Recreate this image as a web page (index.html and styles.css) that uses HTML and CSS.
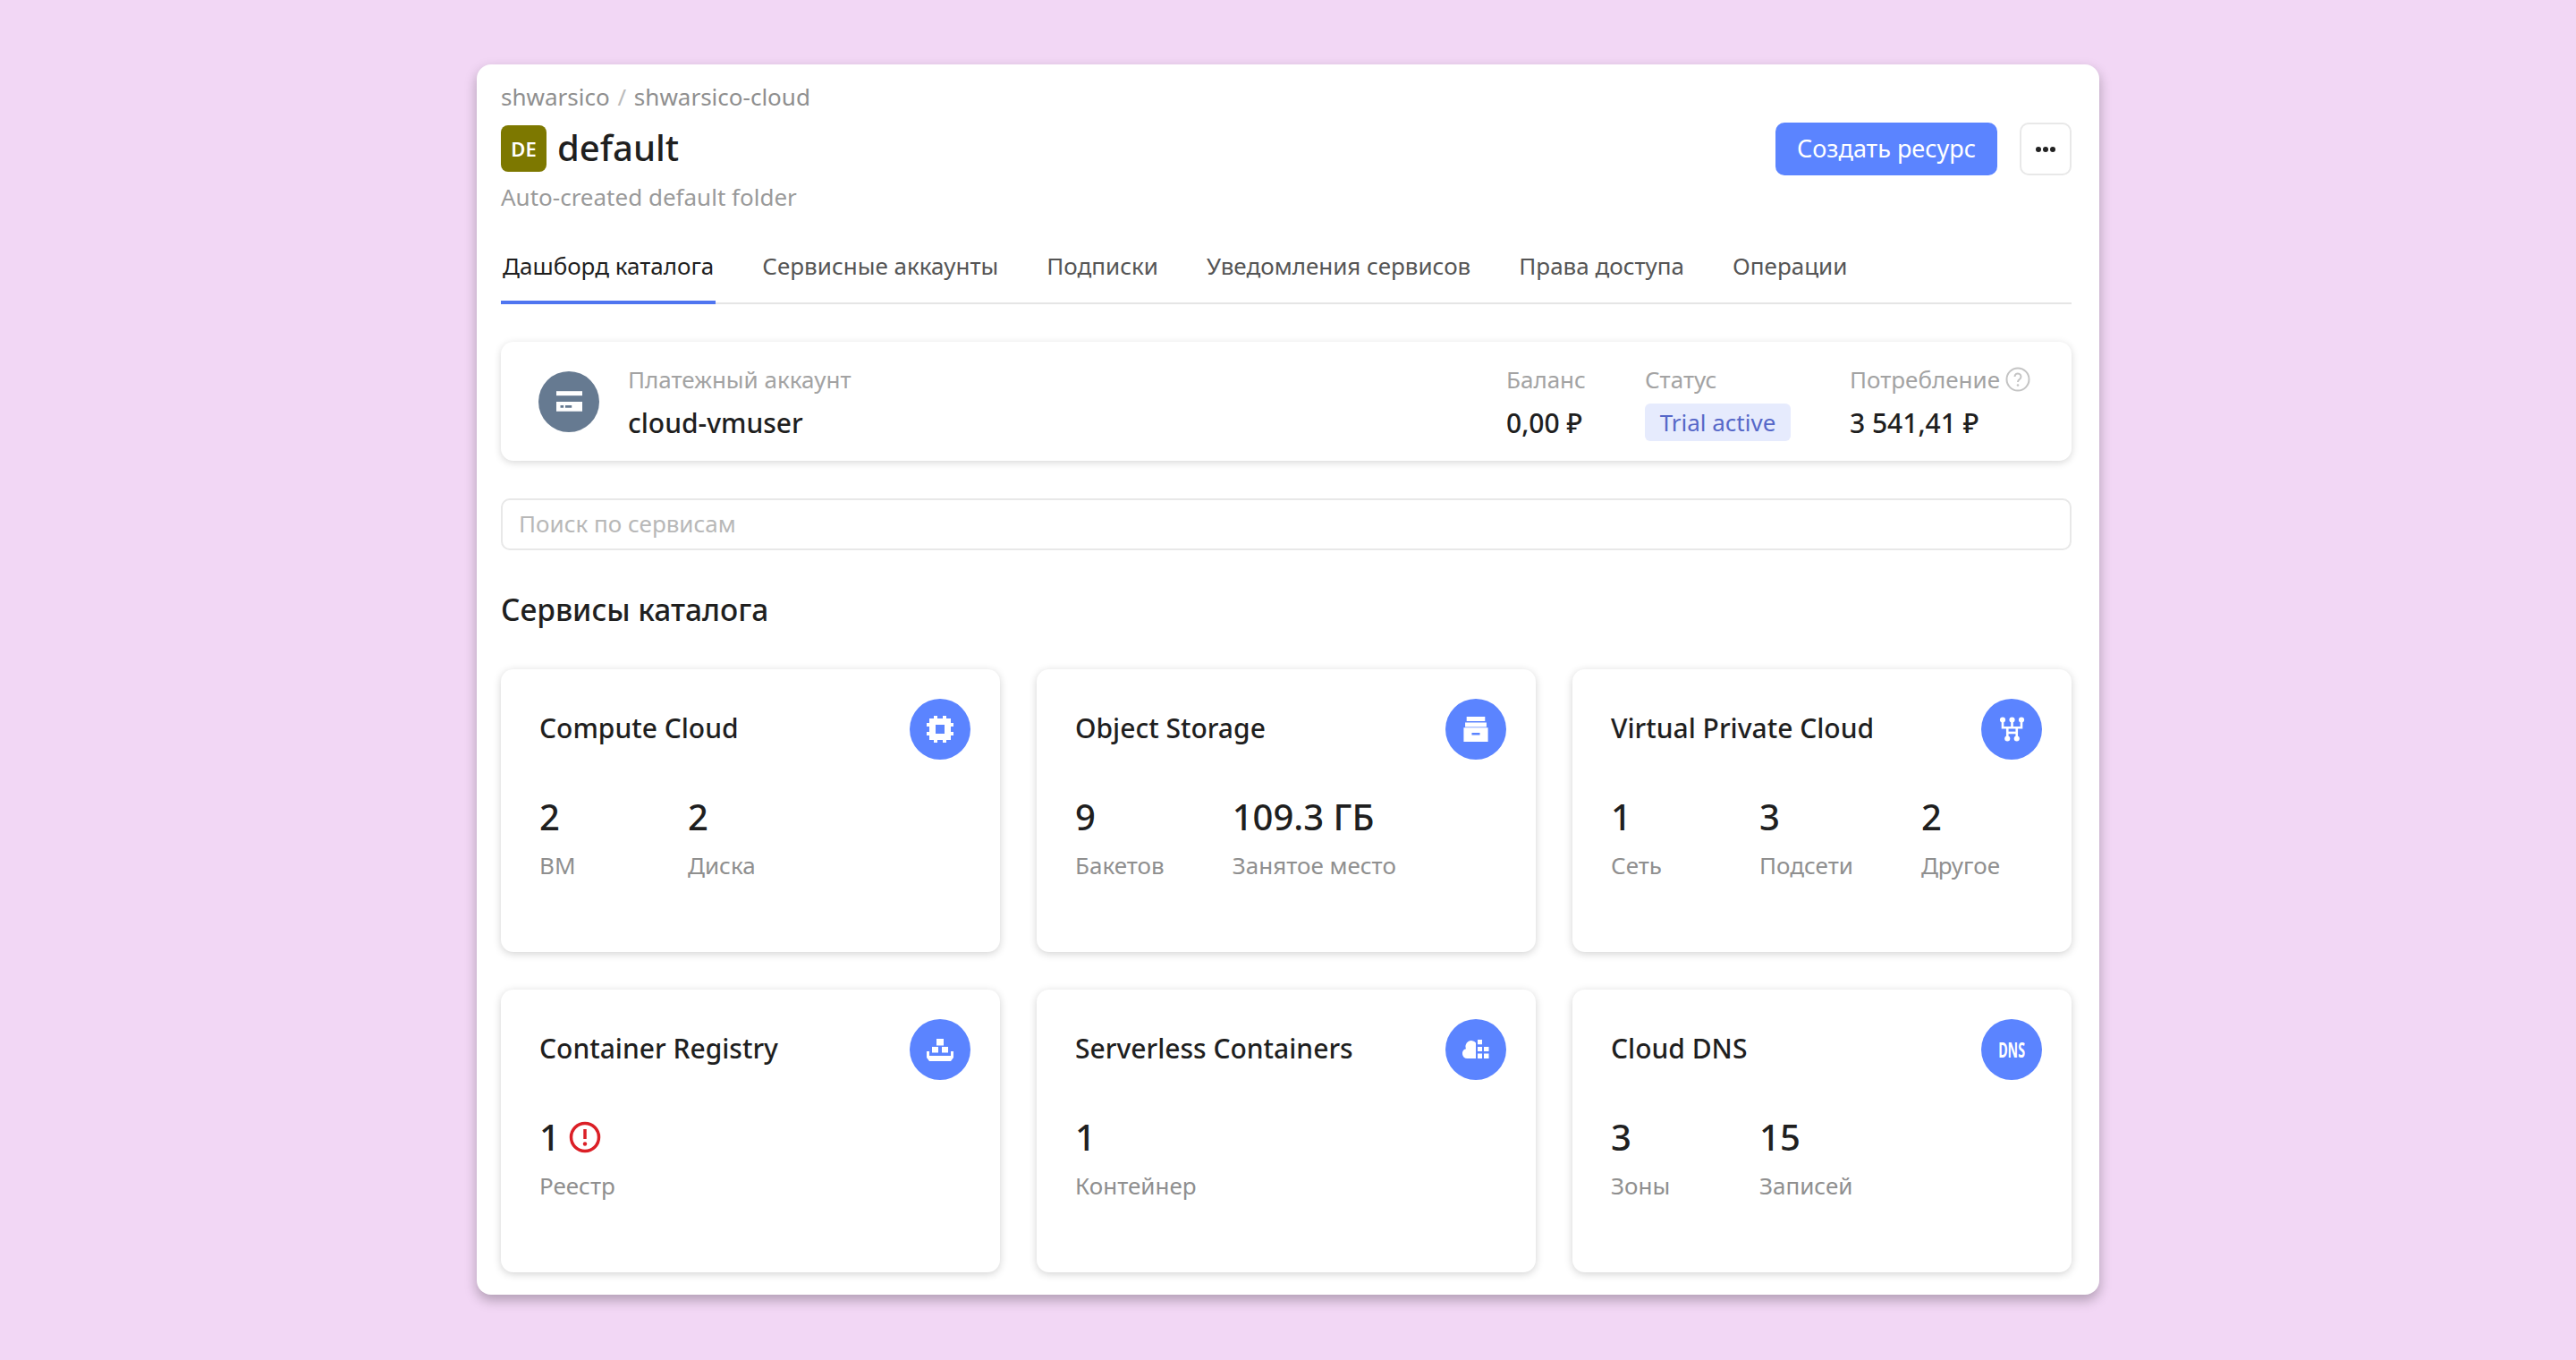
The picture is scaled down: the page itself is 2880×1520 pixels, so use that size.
FILE: index.html
```html
<!DOCTYPE html>
<html lang="ru">
<head>
    <meta charset="UTF-8">
    <title>default - Дашборд каталога</title>
    <link rel="stylesheet" href="styles.css">
</head>
<body>
    <div class="panel">

        <!-- Шапка каталога -->
        <div class="header">
            <div class="headerInfo">
                <div class="crumbs">shwarsico <span class="crumbSep">/</span> shwarsico-cloud</div>
                <div class="titleRow">
                    <span class="folderBadge">DE</span>
                    <h1 class="title">default</h1>
                </div>
                <div class="subtitle">Auto-created default folder</div>
            </div>
            <div class="actions">
                <button class="button">Создать ресурс</button>
                <button class="moreButton" aria-label="Ещё">
                    <svg width="26" height="8" viewBox="0 0 26 8"><circle cx="5" cy="4" r="3" fill="#222"/><circle cx="13" cy="4" r="3" fill="#222"/><circle cx="21" cy="4" r="3" fill="#222"/></svg>
                </button>
            </div>
        </div>

        <div class="tabs">
            <a class="tab active">Дашборд каталога</a>
            <a class="tab">Сервисные аккаунты</a>
            <a class="tab">Подписки</a>
            <a class="tab">Уведомления сервисов</a>
            <a class="tab">Права доступа</a>
            <a class="tab">Операции</a>
        </div>

        <!-- Платежный аккаунт -->
        <div class="billing">
            <span class="billingIcon">
                <svg width="29" height="23" viewBox="1 1 32 25"><rect x="1" y="1" width="32" height="5.500" fill="#fff"/><path fill="#fff" fill-rule="evenodd" d="M1 14h32v12H1zM6 18.500v3h4v-3zM12 18.500v3h8v-3z"/></svg>
            </span>
            <div class="billingName">
                <div class="label">Платежный аккаунт</div>
                <div class="value">cloud-vmuser</div>
            </div>
            <div class="billingCol colBalance">
                <div class="label">Баланс</div>
                <div class="value">0,00 ₽</div>
            </div>
            <div class="billingCol colStatus">
                <div class="label">Статус</div>
                <span class="statusTag">Trial active</span>
            </div>
            <div class="billingCol colUsage">
                <div class="label usageLabel">Потребление
                    <svg width="28" height="28" viewBox="0 0 28 28"><circle cx="14" cy="14" r="12.5" fill="none" stroke="#c4c4c4" stroke-width="2"/><path d="M10.500 11a3.500 3.500 0 1 1 5.500 2.800c-1.300.9-2 1.600-2 3.200" fill="none" stroke="#c4c4c4" stroke-width="2"/><circle cx="14" cy="20.500" r="1.300" fill="#c4c4c4"/></svg>
                </div>
                <div class="value">3 541,41 ₽</div>
            </div>
        </div>

        <div class="search">Поиск по сервисам</div>

        <h2 class="sectionTitle">Сервисы каталога</h2>

        <div class="services">

            <div class="card">
                <div class="cardHead">
                    <span class="cardName">Compute Cloud</span>
                    <span class="cardIcon">
                        <svg width="30" height="30" viewBox="1 1 30 30"><path fill="#fff" fill-rule="evenodd" d="M9 1h4v3h6V1h4v3h5v5h3v4h-3v6h3v4h-3v5h-5v3h-4v-3h-6v3H9v-3H4v-5H1v-4h3v-6H1V9h3V4h5zM11 11v10h10V11z"/></svg>
                    </span>
                </div>
                <div class="stats">
                    <div class="stat"><div class="statNum">2</div><div class="statName">ВМ</div></div>
                    <div class="stat"><div class="statNum">2</div><div class="statName">Диска</div></div>
                </div>
            </div>

            <div class="card">
                <div class="cardHead">
                    <span class="cardName">Object Storage</span>
                    <span class="cardIcon">
                        <svg width="28" height="28" viewBox="0 0 33 34"><path fill="#fff" fill-rule="evenodd" d="M4 0h25v6H4zM2 8h29v6H2zM0 15h33v19H0zM11 22v3h11v-3z"/></svg>
                    </span>
                </div>
                <div class="stats">
                    <div class="stat"><div class="statNum">9</div><div class="statName">Бакетов</div></div>
                    <div class="stat"><div class="statNum">109.3 ГБ</div><div class="statName">Занятое место</div></div>
                </div>
            </div>

            <div class="card">
                <div class="cardHead">
                    <span class="cardName">Virtual Private Cloud</span>
                    <span class="cardIcon">
                        <svg width="29" height="28" viewBox="0 0 32 32"><g fill="none" stroke="#fff" stroke-width="3"><path d="M4 4v10h24V4M16 4v10M10 14v14M22 14v14"/></g><g fill="#fff"><circle cx="4" cy="4" r="3.500"/><circle cx="16" cy="4" r="3.500"/><circle cx="28" cy="4" r="3.500"/><circle cx="10" cy="28" r="3.500"/><circle cx="22" cy="28" r="3.500"/></g><path fill="#fff" d="M10 19h12v3H10z"/></svg>
                    </span>
                </div>
                <div class="stats">
                    <div class="stat"><div class="statNum">1</div><div class="statName">Сеть</div></div>
                    <div class="stat"><div class="statNum">3</div><div class="statName">Подсети</div></div>
                    <div class="stat"><div class="statNum">2</div><div class="statName">Другое</div></div>
                </div>
            </div>

            <div class="card">
                <div class="cardHead">
                    <span class="cardName">Container Registry</span>
                    <span class="cardIcon">
                        <svg width="30" height="25" viewBox="0 0 30 25"><path fill="#fff" d="M11 0h8v7.500h-8zM6 9h7v6.500H6zM17 9h7v6.500h-7zM0 14h3v5h24v-5h3v7l-3 4H3l-3-4z"/></svg>
                    </span>
                </div>
                <div class="stats">
                    <div class="stat">
                        <div class="statNum alertNum">1
                            <svg width="36" height="36" viewBox="0 0 36 36"><circle cx="18" cy="18" r="15.500" fill="none" stroke="#db1f26" stroke-width="3.500"/><path d="M18 9v11" stroke="#db1f26" stroke-width="3.500"/><circle cx="18" cy="25.500" r="2.200" fill="#db1f26"/></svg>
                        </div>
                        <div class="statName">Реестр</div>
                    </div>
                </div>
            </div>

            <div class="card">
                <div class="cardHead">
                    <span class="cardName">Serverless Containers</span>
                    <span class="cardIcon">
                        <svg width="30" height="22" viewBox="0 0 30 22"><path fill="#fff" d="M15 3.500V21H5.500a5.500 5.500 0 0 1-1.500-10.800 6.500 6.500 0 0 1 11-6.700z"/><path fill="#fff" d="M17 0h5v5.300h-5zM17 8h5v5h-5zM24 8h5.500v5H24zM17 15.500h5V21h-5zM24 15.500h5.500V21H24z"/></svg>
                    </span>
                </div>
                <div class="stats">
                    <div class="stat"><div class="statNum">1</div><div class="statName">Контейнер</div></div>
                </div>
            </div>

            <div class="card">
                <div class="cardHead">
                    <span class="cardName">Cloud DNS</span>
                    <span class="cardIcon"><span class="dnsText">DNS</span></span>
                </div>
                <div class="stats">
                    <div class="stat"><div class="statNum">3</div><div class="statName">Зоны</div></div>
                    <div class="stat"><div class="statNum">15</div><div class="statName">Записей</div></div>
                </div>
            </div>

        </div>
    </div>
</body>
</html>
```

FILE: styles.css
```css
body {
    margin: 0;
    height: 1520px;
    overflow: hidden;
    background-color: #f2d7f5;
    font-family: "Noto Sans", Arial, sans-serif;
    color: #1f1f1f;
    display: flex;
    justify-content: center;
    align-items: flex-start;
    padding-top: 72px;
    box-sizing: border-box;
}
.panel {
    width: 1814px;
    height: 1375px;
    box-sizing: border-box;
    padding: 0 31px 0 27px;
    background-color: #fff;
    border-radius: 16px;
    box-shadow: 0 6px 14px rgba(0, 0, 0, 0.28);
}
.header {
    display: flex;
    justify-content: space-between;
    height: 206px;
}
.crumbs {
    margin-top: 17px;
    font-size: 26px;
    line-height: 38px;
    color: #8f8f8f;
}
.crumbSep {
    color: #bbb;
    margin: 0 2px;
}
.titleRow {
    display: flex;
    align-items: center;
    gap: 12px;
    margin-top: 13px;
}
.folderBadge {
    width: 51px;
    height: 52px;
    border-radius: 8px;
    background-color: #7d7800;
    color: #fff;
    font-size: 22px;
    font-weight: 600;
    display: flex;
    align-items: center;
    justify-content: center;
}
.title {
    margin: 0;
    padding-bottom: 2px;
    font-size: 40px;
    font-weight: 500;
    line-height: 50px;
}
.subtitle {
    margin-top: 9px;
    font-size: 26px;
    line-height: 38px;
    color: #9a9a9a;
}
.actions {
    display: flex;
    align-items: flex-start;
    gap: 25px;
    padding-top: 65px;
}
.button {
    width: 248px;
    height: 59px;
    padding: 0 0 2px;
    border: none;
    border-radius: 10px;
    background-color: #5b84ff;
    color: #fff;
    font-family: inherit;
    font-size: 27px;
}
.moreButton {
    width: 58px;
    height: 59px;
    padding: 0;
    border: 2px solid #e8e8e8;
    border-radius: 10px;
    background-color: #fff;
    display: flex;
    align-items: center;
    justify-content: center;
}
.tabs {
    display: flex;
    gap: 50px;
    height: 62px;
    box-sizing: border-box;
    border-bottom: 2px solid #e5e5e5;
}
.tab {
    height: 62px;
    box-sizing: border-box;
    padding: 0 2px;
    font-size: 26px;
    line-height: 38px;
    color: #555;
}
.tab.active {
    color: #1f1f1f;
    border-bottom: 4px solid #4f75f0;
}
.billing {
    display: flex;
    align-items: center;
    height: 133px;
    margin-top: 42px;
    padding: 0 46px 0 42px;
    border-radius: 14px;
    box-shadow: 0 2px 8px rgba(0, 0, 0, 0.16);
}
.billingIcon {
    width: 68px;
    height: 68px;
    border-radius: 50%;
    background-color: #667a91;
    display: flex;
    align-items: center;
    justify-content: center;
}
.billingName {
    flex: 1;
    margin-left: 32px;
}
.label {
    height: 48px;
    font-size: 26px;
    line-height: 38px;
    color: #a3a3a3;
}
.value {
    font-size: 30px;
    font-weight: 500;
    line-height: 40px;
    color: #1f1f1f;
}
.colBalance {
    width: 155px;
}
.colStatus {
    width: 229px;
}
.usageLabel {
    display: flex;
    align-items: flex-start;
    gap: 6px;
}
.usageLabel svg {
    margin-top: 5px;
}
.statusTag {
    display: block;
    width: 163px;
    height: 42px;
    margin-top: -2px;
    border-radius: 6px;
    background-color: #e6ebfd;
    color: #5668c8;
    font-size: 26px;
    line-height: 42px;
    text-align: center;
}
.search {
    height: 58px;
    box-sizing: border-box;
    margin-top: 42px;
    padding-left: 18px;
    border: 2px solid #e8e8e8;
    border-radius: 10px;
    font-size: 26px;
    line-height: 52px;
    color: #b8b8b8;
}
.sectionTitle {
    margin: 44px 0 45px;
    font-size: 33.5px;
    font-weight: 500;
    line-height: 44px;
}
.services {
    display: grid;
    grid-template-columns: repeat(3, 1fr);
    grid-auto-rows: 316px;
    gap: 42px 41px;
}
.card {
    padding: 33px 33px 0 43px;
    border-radius: 14px;
    box-shadow: 0 2px 10px rgba(0, 0, 0, 0.18);
}
.cardHead {
    display: flex;
    justify-content: space-between;
    align-items: center;
}
.cardName {
    padding-bottom: 4px;
    font-size: 30px;
    font-weight: 500;
}
.cardIcon {
    width: 68px;
    height: 68px;
    border-radius: 50%;
    background-color: #5b84ff;
    display: flex;
    align-items: center;
    justify-content: center;
}
.dnsText {
    color: #fff;
    font-size: 23px;
    font-weight: 700;
    transform: scaleX(0.62);
}
.stats {
    display: flex;
    gap: 76px;
    margin-top: 40px;
}
.stat {
    min-width: 90px;
}
.statNum {
    font-size: 40px;
    font-weight: 500;
    line-height: 48px;
}
.alertNum {
    display: flex;
    align-items: center;
    gap: 10px;
}
.statName {
    margin-top: 11px;
    font-size: 26px;
    line-height: 38px;
    color: #8f8f8f;
}
```
